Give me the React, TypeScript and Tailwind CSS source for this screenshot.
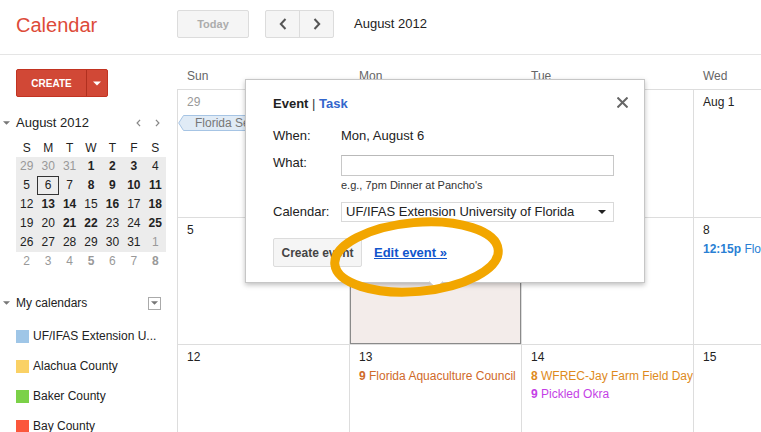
import React from "react";

const Chevron = ({ dir, className }: { dir: "left" | "right"; className?: string }) => (
  <svg viewBox="0 0 8 12" className={className} fill="none" stroke="currentColor" strokeWidth="2">
    <path d={dir === "left" ? "M6.5 1 1.8 6l4.7 5" : "M1.5 1 6.2 6 1.5 11"} />
  </svg>
);

const Caret = ({ className }: { className?: string }) => (
  <svg viewBox="0 0 8 4" className={className} fill="currentColor">
    <path d="M0 0h8L4 4z" />
  </svg>
);

const miniWeeks = [
  ["29~", "30~", "31~", "1*", "2*", "3*", "4"],
  ["5", "6!", "7", "8*", "9*", "10*", "11*"],
  ["12", "13*", "14*", "15", "16*", "17", "18*"],
  ["19", "20", "21*", "22*", "23", "24", "25*"],
  ["26", "27", "28", "29", "30", "31", "1~"],
];
const nextWeek = ["2~", "3~", "4~", "5~*", "6~", "7~", "8~*"];

const calendars = [
  { color: "bg-[#9fc6e7]", name: "UF/IFAS Extension U..." },
  { color: "bg-[#fad165]", name: "Alachua County" },
  { color: "bg-[#7bd148]", name: "Baker County" },
  { color: "bg-[#fb573b]", name: "Bay County" },
];

type Ev = { time: string; title: string; color: string };
type Cell = { date: string; muted?: boolean; selected?: boolean; chip?: string; events?: Ev[] };

const weeks: Cell[][] = [
  [
    { date: "29", muted: true, chip: "Florida Sea Grant Week" },
    { date: "30" },
    { date: "31" },
    { date: "Aug 1" },
    { date: "2" },
    { date: "3" },
    { date: "4" },
  ],
  [
    { date: "5" },
    { date: "6", selected: true },
    { date: "7" },
    { date: "8", events: [{ time: "12:15p", title: "Florida Master Gardener", color: "text-[#2a7fd4]" }] },
    { date: "9" },
    { date: "10" },
    { date: "11" },
  ],
  [
    { date: "12" },
    { date: "13", events: [{ time: "9", title: "Florida Aquaculture Council", color: "text-[#cf6a2a]" }] },
    {
      date: "14",
      events: [
        { time: "8", title: "WFREC-Jay Farm Field Day", color: "text-[#de8a1c]" },
        { time: "9", title: "Pickled Okra", color: "text-[#c53fe6]" },
      ],
    },
    { date: "15" },
    { date: "16" },
    { date: "17" },
    { date: "18" },
  ],
];

function MiniDay({ d }: { d: string }) {
  const muted = d.includes("~");
  const bold = d.includes("*");
  const today = d.includes("!");
  return (
    <div
      className={`h-[19px] text-center leading-[19px] ${muted ? "text-[#999]" : "text-[#222]"} ${
        bold ? "font-bold" : ""
      } ${today ? "shadow-[inset_0_0_0_1px_#333]" : ""}`}
    >
      {d.replace(/[^0-9]/g, "")}
    </div>
  );
}

export default function App() {
  return (
    <div className="relative h-[432px] w-[761px] overflow-hidden bg-white font-['Liberation_Sans',Arial,sans-serif] text-[#222]">
      <header className="flex h-[55px] border-b border-[#e5e5e5]">
        <div className="w-[177px] shrink-0 pl-4 pt-[13px] text-[20px] leading-[24px] text-[#dd4b39]">Calendar</div>
        <div className="mt-[10px] flex h-[28px] items-center">
          <button className="h-[28px] w-[72px] rounded-[2px] border border-[#dcdcdc] bg-[#f5f5f5] text-[11px] font-bold text-[#acacac]">
            Today
          </button>
          <div className="ml-4 flex h-[28px] w-[69px] rounded-[2px] border border-[#dcdcdc] bg-[#f5f5f5]">
            <button className="flex w-[34px] items-center justify-center border-r border-[#dcdcdc] text-[#555]">
              <Chevron dir="left" className="h-[12px] w-[8px]" />
            </button>
            <button className="flex flex-1 items-center justify-center text-[#555]">
              <Chevron dir="right" className="h-[12px] w-[8px]" />
            </button>
          </div>
          <span className="ml-5 text-[13px]">August 2012</span>
        </div>
      </header>

      <div className="flex">
        <aside className="w-[177px] shrink-0 text-[12px]">
          <div className="ml-4 mt-[14px] flex h-[28px] w-[92px] rounded-[2px] border border-[#c23321] bg-[#d14836] text-white">
            <div className="flex w-[70px] items-center justify-center border-r border-[#b0301f] text-[10px] font-bold">
              CREATE
            </div>
            <div className="flex flex-1 items-center justify-center">
              <Caret className="h-[5px] w-[8px]" />
            </div>
          </div>

          <div className="mt-[17px] flex h-[18px] items-center pl-[3px] pr-[17px]">
            <Caret className="h-[4px] w-[7px] text-[#777]" />
            <span className="ml-[6px] text-[13px]">August 2012</span>
            <div className="ml-auto flex items-center gap-[14px] text-[#888]">
              <Chevron dir="left" className="h-[8px] w-[5px]" />
              <Chevron dir="right" className="h-[8px] w-[5px]" />
            </div>
          </div>

          <div className="ml-4 mt-[7px] grid h-[18px] w-[150px] grid-cols-7 text-center leading-[18px]">
            {["S", "M", "T", "W", "T", "F", "S"].map((d, i) => (
              <div key={i}>{d}</div>
            ))}
          </div>
          <div className="ml-4 w-[150px] bg-[#ececec]">
            {miniWeeks.map((w, i) => (
              <div key={i} className="grid grid-cols-7">
                {w.map((d, j) => (
                  <MiniDay key={j} d={d} />
                ))}
              </div>
            ))}
          </div>
          <div className="ml-4 grid w-[150px] grid-cols-7">
            {nextWeek.map((d, j) => (
              <MiniDay key={j} d={d} />
            ))}
          </div>

          <div className="mt-[22px] flex h-[20px] items-center pl-[3px] pr-[16px]">
            <Caret className="h-[4px] w-[7px] text-[#777]" />
            <span className="ml-[6px] text-[12px]">My calendars</span>
            <div className="ml-auto flex h-[13px] w-[13px] items-center justify-center border border-[#aaa] bg-white">
              <Caret className="h-[4px] w-[7px] text-[#777]" />
            </div>
          </div>

          <div className="mt-[8px]">
            {calendars.map((c) => (
              <div key={c.name} className="flex h-[30px] items-center pl-4">
                <span className={`h-[13px] w-[13px] ${c.color}`} />
                <span className="ml-1 whitespace-nowrap">{c.name}</span>
              </div>
            ))}
          </div>
        </aside>

        <main className="min-w-0 flex-1 overflow-hidden">
          <div className="w-[1205px]">
            <div className="grid h-[34px] grid-cols-7 pl-px text-[12px] leading-[14px] text-[#666]">
              {["Sun", "Mon", "Tue", "Wed", "Thu", "Fri", "Sat"].map((d) => (
                <div key={d} className="pl-[9px] pt-[14px]">
                  {d}
                </div>
              ))}
            </div>
            <div className="border-l border-t border-[#dddddd]">
              {weeks.map((week, wi) => (
                <div key={wi} className={`grid grid-cols-7 ${wi === 0 ? "h-[128px]" : "h-[127px]"}`}>
                  {week.map((c, ci) => (
                    <div
                      key={ci}
                      className={`overflow-hidden whitespace-nowrap border-b border-r border-[#dddddd] pt-[5px] text-[12px] leading-[14px] ${
                        c.selected ? "bg-[#f3ecea] shadow-[inset_0_0_0_1px_#8a8a8a]" : ""
                      }`}
                    >
                      <div className={`pl-[9px] ${c.muted ? "text-[#999]" : "text-[#222]"}`}>{c.date}</div>
                      {c.chip && (
                        <div className="mt-[6px] flex h-[16px] items-stretch">
                          <svg viewBox="0 0 6 16" className="h-[16px] w-[6px] shrink-0">
                            <path d="M6 0.5H5.5L0.7 8l4.8 7.5H6" fill="#e0ebf6" stroke="#a6c4e4" />
                          </svg>
                          <div className="flex flex-1 items-center border-y border-r border-[#a6c4e4] bg-[#e0ebf6] pl-[11px] text-[#777]">
                            {c.chip}
                          </div>
                        </div>
                      )}
                      {c.events && (
                        <div className="mt-[3px]">
                          {c.events.map((e) => (
                            <div key={e.title} className={`pl-[9px] leading-[18px] ${e.color}`}>
                              <span className="font-bold">{e.time}</span> {e.title}
                            </div>
                          ))}
                        </div>
                      )}
                    </div>
                  ))}
                </div>
              ))}
            </div>
          </div>
        </main>
      </div>

      <div className="absolute left-[245px] top-[79px] h-[204px] w-[400px] border border-[#c6c6c6] bg-white pl-[27px] pt-[16px] text-[13px] leading-[16px] shadow-[0_2px_5px_rgba(0,0,0,0.25)]">
        <div className="font-bold">
          Event <span className="font-normal text-[#333]">|</span> <span className="text-[#3366cc]">Task</span>
        </div>
        <button className="absolute right-[16px] top-[17px] text-[#666]">
          <svg viewBox="0 0 11 11" className="h-[11px] w-[11px]" stroke="currentColor" strokeWidth="2">
            <path d="M0.5 0.5l10 10M10.5 0.5l-10 10" />
          </svg>
        </button>
        <div className="mt-4 flex">
          <span className="w-[68px]">When:</span>
          <span>Mon, August 6</span>
        </div>
        <div className="mt-[11px] flex items-start">
          <span className="w-[68px] pt-[-1px]">What:</span>
          <div className="h-[21px] w-[273px] border border-[#c8c8c8] border-t-[#b9b9b9] bg-white" />
        </div>
        <div className="mt-[3px] pl-[68px] text-[11px] leading-[13px] text-[#333]">e.g., 7pm Dinner at Pancho's</div>
        <div className="mt-[10px] flex items-center">
          <span className="w-[68px]">Calendar:</span>
          <div className="flex h-[20px] w-[273px] items-center border border-[#d9d9d9] pl-[4px] pr-[7px]">
            <span className="flex-1 whitespace-nowrap">UF/IFAS Extension University of Florida</span>
            <Caret className="h-[4px] w-[8px] text-[#222]" />
          </div>
        </div>
        <div className="mt-4 flex items-center">
          <button className="h-[29px] w-[89px] rounded-[2px] border border-[#dcdcdc] bg-[#f5f5f5] text-[12px] font-bold text-[#444]">
            Create event
          </button>
          <a className="ml-[12px] font-bold text-[#1155cc] underline">Edit event »</a>
        </div>
        <svg viewBox="0 0 14 8" className="absolute left-[183px] top-full -mt-px h-[8px] w-[14px]">
          <path d="M0 0.5L7 7.3L14 0.5" fill="white" stroke="#c6c6c6" />
        </svg>
      </div>

      <svg className="pointer-events-none absolute left-0 top-0 h-[432px] w-[761px]" viewBox="0 0 761 432">
        <ellipse
          cx="416.5"
          cy="257"
          rx="82"
          ry="34.5"
          fill="none"
          stroke="#f2a600"
          strokeWidth="9"
          transform="rotate(-5 416.5 257)"
        />
      </svg>
    </div>
  );
}
